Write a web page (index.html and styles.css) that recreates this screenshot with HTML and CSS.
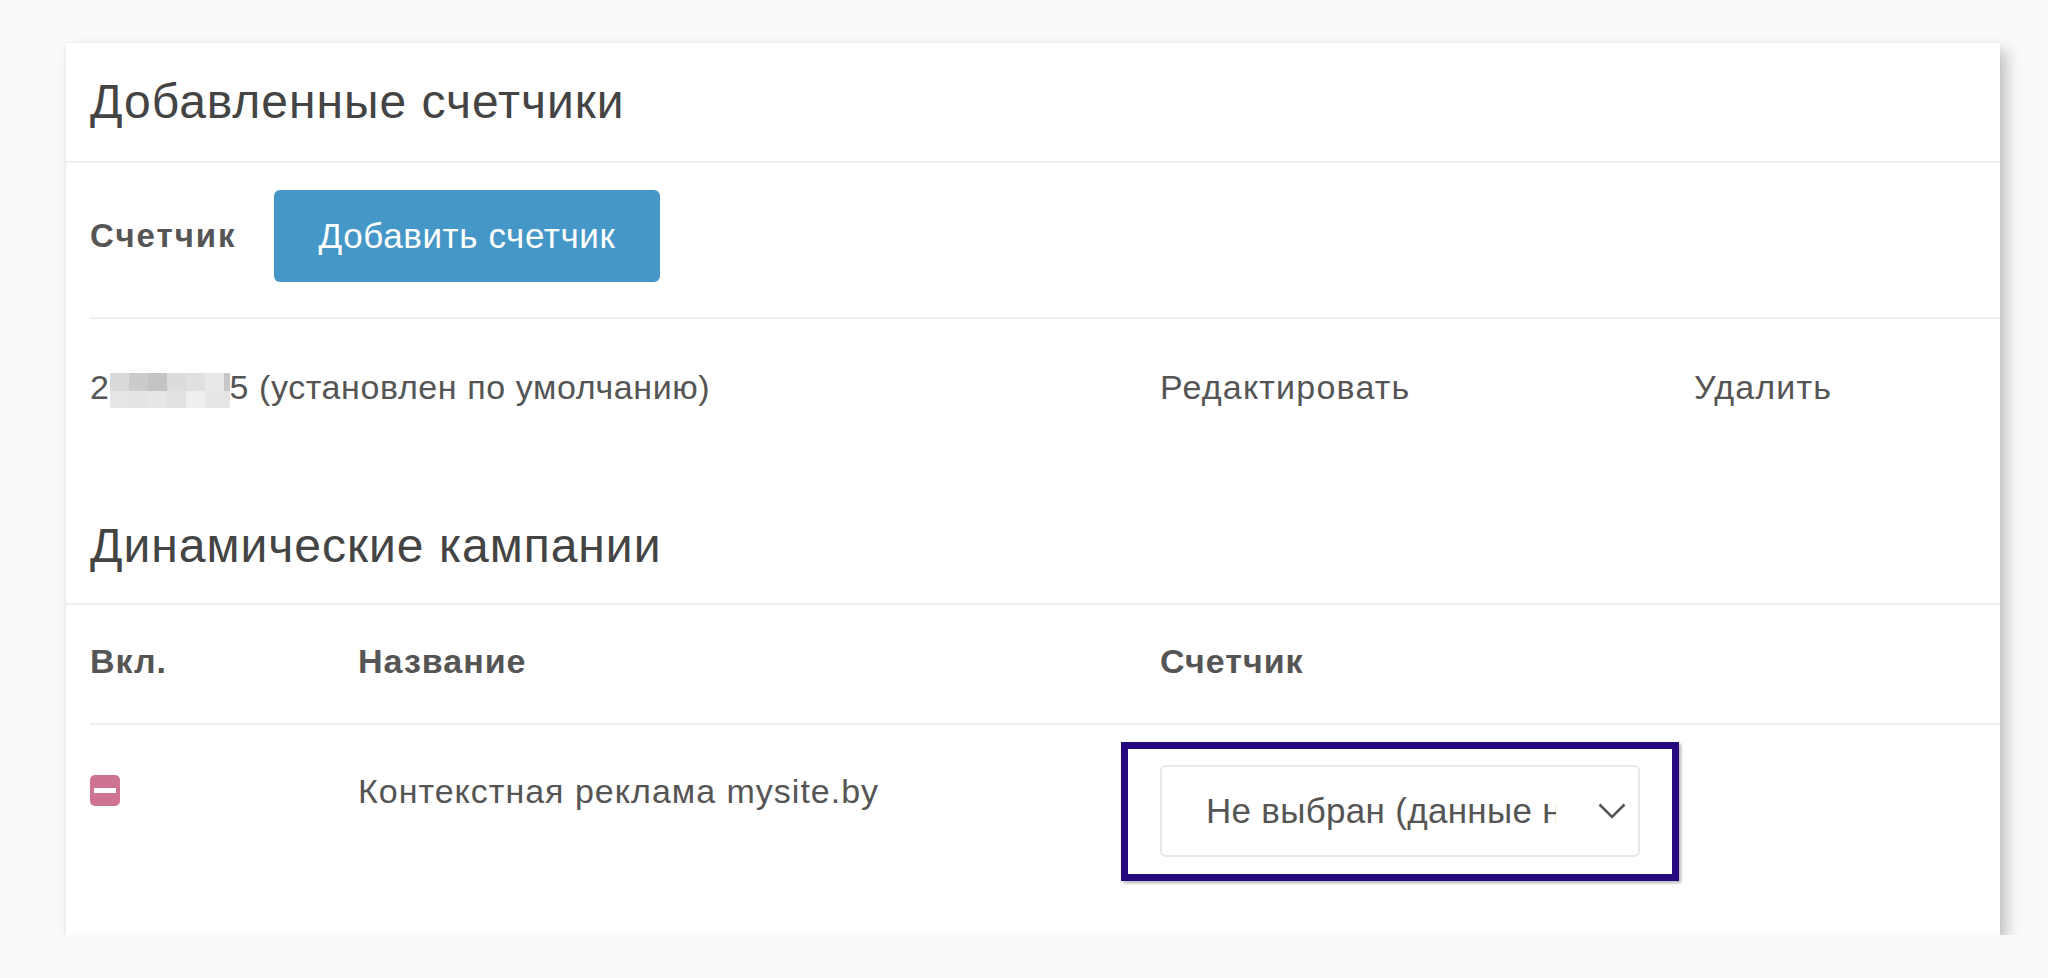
FILE: index.html
```html
<!DOCTYPE html>
<html>
<head>
    <title>Счетчики</title>
    <link rel="stylesheet" href="styles.css">
</head>
<body>
<div class="page">
    <div class="card">
        <div class="panel-heading">
            <h2>Добавленные счетчики</h2>
        </div>
        <div class="panel-body">
            <div class="add-row">
                <span class="add-label">Счетчик</span>
                <button type="button" class="add-btn">Добавить счетчик</button>
            </div>
            <div class="counter-row">
                <div class="counter-name">2<span class="mosaic">
                    <i style="background:#d9d9d9"></i><i style="background:#cbcbcb"></i><i style="background:#c4c4c4"></i><i style="background:#dcdcdc"></i><i style="background:#e0e0e0"></i><i style="background:#e8e8e8"></i><i style="background:#c8c8c8"></i>
                    <i style="background:#e6e6e6"></i><i style="background:#e4e4e4"></i><i style="background:#e6e6e6"></i><i style="background:#e1e1e1"></i><i style="background:#efefef"></i><i style="background:#e7e7e7"></i><i style="background:#e5e5e5"></i>
                </span>5 (установлен по умолчанию)</div>
                <a class="row-link">Редактировать</a>
                <a class="row-link">Удалить</a>
            </div>
        </div>

        <div class="panel-heading second">
            <h2>Динамические кампании</h2>
        </div>
        <div class="panel-body">
            <div class="campaign-head">
                <span>Вкл.</span>
                <span>Название</span>
                <span>Счетчик</span>
            </div>
            <div class="campaign-row">
                <div class="cell"><span class="toggle-off"></span></div>
                <div class="cell">Контекстная реклама mysite.by</div>
                <div class="cell select-cell">
                    <div class="select-wrap">
                        <div class="select">
                            <span class="select-text">Не выбран (данные не собираются)</span>
                            <svg class="chevron" width="28" height="16" viewBox="0 0 28 16">
                                <polyline points="1.5,1.5 14,14 26.5,1.5" fill="none" stroke="#555" stroke-width="2.6"/>
                            </svg>
                        </div>
                    </div>
                </div>
            </div>
        </div>
    </div>
</div>
</body>
</html>
```

FILE: styles.css
```css
body {
    margin: 0;
    background: #fafafa;
    font-family: "Liberation Sans", Arial, sans-serif;
    color: #555;
}
.page {
    padding: 43px 0 0 66px;
}
.card {
    width: 1934px;
    height: 892px;
    background: #fff;
    box-shadow: 7px 7px 14px rgba(0, 0, 0, 0.22), 0 0 3px rgba(0, 0, 0, 0.06);
}
.panel-heading {
    height: 120px;
    box-sizing: border-box;
    padding: 35px 24px 0;
    border-bottom: 2px solid #efefef;
}
.panel-heading.second {
    height: 118px;
}
.panel-heading h2 {
    margin: 0;
    font-size: 48px;
    line-height: 48px;
    font-weight: normal;
    letter-spacing: 1px;
    color: #444;
}
.panel-body {
    padding-left: 24px;
}
.add-row {
    display: flex;
    align-items: center;
    gap: 37px;
    padding: 27px 0 35px;
    border-bottom: 2px solid #efefef;
}
.add-label {
    font-size: 33px;
    font-weight: bold;
    letter-spacing: 2px;
}
.add-btn {
    height: 92px;
    padding: 0 45px;
    border: none;
    border-radius: 6px;
    background: #4597c8;
    color: #fff;
    font-family: inherit;
    font-size: 35px;
    letter-spacing: 0.6px;
    cursor: pointer;
}
.counter-row {
    display: grid;
    grid-template-columns: 1070px 534px auto;
    height: 168px;
    box-sizing: border-box;
    padding-top: 51px;
    font-size: 34px;
    line-height: 34px;
    letter-spacing: 0.6px;
}
.mosaic {
    display: inline-grid;
    grid-template-columns: repeat(6, 19px) 6px;
    grid-template-rows: 18px 17px;
    vertical-align: 8px;
}
.row-link {
    color: #555;
    letter-spacing: 1.2px;
    cursor: pointer;
}
.campaign-head {
    display: grid;
    grid-template-columns: 268px 802px auto;
    padding: 39px 0 45px;
    font-size: 34px;
    line-height: 34px;
    font-weight: bold;
    letter-spacing: 1px;
    border-bottom: 2px solid #efefef;
}
.campaign-row {
    display: grid;
    grid-template-columns: 268px 802px auto;
    font-size: 34px;
    line-height: 34px;
    letter-spacing: 1px;
}
.cell {
    padding-top: 49px;
}
.select-cell {
    padding-top: 40px;
}
.toggle-off {
    display: block;
    width: 30px;
    height: 31px;
    margin-top: 1px;
    border-radius: 5px;
    background: #cf7393;
    position: relative;
}
.toggle-off::before {
    content: "";
    position: absolute;
    left: 4px;
    top: 13px;
    width: 22px;
    height: 5px;
    background: #fff;
}
.select-wrap {
    position: relative;
    width: 480px;
}
.select-wrap::after {
    content: "";
    position: absolute;
    top: -23px;
    bottom: -24px;
    left: -39px;
    right: -39px;
    border: 7px solid #25097f;
    box-shadow: 2px 2px 3px rgba(0, 0, 0, 0.3);
}
.select {
    display: flex;
    align-items: center;
    height: 92px;
    box-sizing: border-box;
    padding-left: 44px;
    border: 2px solid #e8e8e8;
    border-radius: 6px;
}
.select-text {
    width: 350px;
    overflow: hidden;
    white-space: nowrap;
    font-size: 35px;
    line-height: 40px;
    letter-spacing: 0.3px;
}
.chevron {
    margin-left: 42px;
}
```
